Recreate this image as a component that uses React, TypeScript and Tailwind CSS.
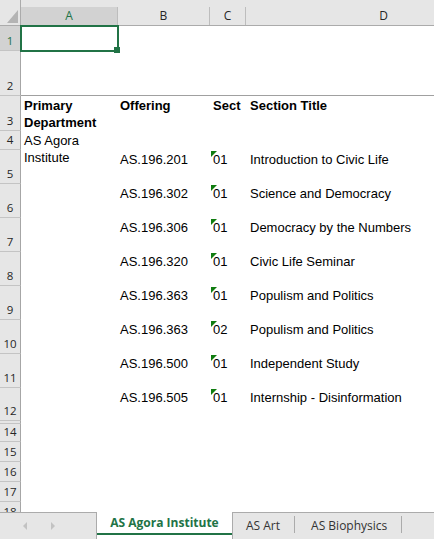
import React from "react";

type Row = {
  n: string;
  h: number;
  a?: string;
  b?: string;
  c?: string;
  d?: string;
  bold?: boolean;
  flag?: boolean;
  line?: boolean;
  sel?: boolean;
};

const data: [string, string, string][] = [
  ["AS.196.201", "01", "Introduction to Civic Life"],
  ["AS.196.302", "01", "Science and Democracy"],
  ["AS.196.306", "01", "Democracy by the Numbers"],
  ["AS.196.320", "01", "Civic Life Seminar"],
  ["AS.196.363", "01", "Populism and Politics"],
  ["AS.196.363", "02", "Populism and Politics"],
  ["AS.196.500", "01", "Independent Study"],
  ["AS.196.505", "01", "Internship - Disinformation"],
];

const ROWS: Row[] = [
  { n: "1", h: 25, sel: true },
  { n: "2", h: 45, line: true },
  { n: "3", h: 35, a: "Primary Department", b: "Offering", c: "Sect", d: "Section Title", bold: true },
  { n: "4", h: 19, a: "AS Agora Institute" },
  ...data.map(([b, c, d], i) => ({
    n: String(i + 5),
    h: i === 7 ? 33 : 34,
    b,
    c,
    d,
    flag: true,
  })),
  { n: "", h: 3 },
  { n: "14", h: 18 },
  { n: "15", h: 20 },
  { n: "16", h: 20 },
  { n: "17", h: 20 },
  { n: "18", h: 20 },
];

const COLS = [
  { id: "A", w: "w-[97px]", sel: true },
  { id: "B", w: "w-[92px]" },
  { id: "C", w: "w-[36px]" },
  { id: "D", w: "w-[276px]" },
];

function Flag() {
  return (
    <svg className="absolute left-[1px] top-[1px]" width="6" height="6" viewBox="0 0 6 6">
      <polygon points="0,0 6,0 0,6" fill="#107c10" />
    </svg>
  );
}

function SheetRow({ r }: { r: Row }) {
  const text = r.bold ? "font-bold" : "";
  return (
    <div className="flex shrink-0" style={{ height: r.h }}>
      <div
        className={
          "flex w-[21px] shrink-0 items-end justify-center border-r border-b border-r-[#a6a6a6] border-b-[#c4c4c4] pb-[1px] text-[11.5px] leading-[16px] overflow-hidden " +
          (r.sel ? "bg-[#d2d2d2] text-[#217346]" : "bg-[#e6e6e6] text-[#262626]")
        }
        style={{ fontFamily: '"Open Sans", "Noto Sans", sans-serif' }}
      >
        {r.n}
      </div>
      <div
        className={
          "flex flex-1 text-[13px] leading-[17px] text-black " +
          text +
          (r.line ? " border-b border-[#a0a0a0]" : "")
        }
        style={{ fontFamily: '"Liberation Sans", Arial, sans-serif' }}
      >
        <div className="w-[97px] shrink-0 pl-[3px] pr-[2px] pt-[1px]">{r.a}</div>
        <div className="w-[92px] shrink-0 whitespace-nowrap pl-[2px] pt-[1px]">{r.b}</div>
        <div className="relative w-[36px] shrink-0 whitespace-nowrap pl-[3px] pt-[1px]">
          {r.flag && <Flag />}
          {r.c}
        </div>
        <div className="w-[276px] shrink-0 whitespace-nowrap pl-[4px] pt-[1px]">{r.d}</div>
      </div>
    </div>
  );
}

export default function App() {
  const ui = { fontFamily: '"Open Sans", "Noto Sans", sans-serif' };
  return (
    <div className="flex h-[539px] w-[434px] flex-col overflow-hidden bg-white">
      <div className="relative flex-1 overflow-hidden">
        {/* column headers */}
        <div className="flex h-[26px] bg-[#e6e6e6]" style={ui}>
          <div className="flex w-[21px] shrink-0 items-end justify-end border-r border-b border-[#ababab] pr-[2px] pb-[2px]">
            <svg width="11" height="13" viewBox="0 0 11 13">
              <polygon points="11,0 11,13 0,13" fill="#b4b4b4" />
            </svg>
          </div>
          {COLS.map((c) => (
            <div key={c.id} className={c.w + " shrink-0 border-b border-[#ababab] pt-[7px]"}>
              <div
                className={
                  "flex h-full items-center justify-center border-r border-[#bdbdbd] text-[12px] " +
                  (c.sel ? "bg-[#d2d2d2] text-[#217346]" : "text-[#262626]")
                }
              >
                {c.id}
              </div>
            </div>
          ))}
        </div>

        {ROWS.map((r, i) => (
          <SheetRow key={i} r={r} />
        ))}

        {/* active cell */}
        <div className="absolute left-[20px] top-[25px] h-[27px] w-[99px] border-2 border-[#217346]" />
        <div className="absolute left-[114px] top-[47px] h-[6px] w-[6px] bg-[#217346]" />
      </div>

      {/* sheet tabs */}
      <div className="flex h-[27px] shrink-0 bg-[#e6e6e6] text-[12px]" style={ui}>
        <div className="flex w-[96px] shrink-0 items-center gap-[24px] border-t border-[#ababab] pl-[23px]">
          <svg width="4" height="8" viewBox="0 0 4 8">
            <polygon points="4,0 4,8 0,4" fill="#c2c2c2" />
          </svg>
          <svg width="4" height="8" viewBox="0 0 4 8">
            <polygon points="0,0 0,8 4,4" fill="#c2c2c2" />
          </svg>
        </div>
        <div className="flex w-[137px] shrink-0 flex-col border-x border-[#ababab] bg-white">
          <div className="flex flex-1 items-center justify-center pt-[1px] font-bold text-[#217346]">
            AS Agora Institute
          </div>
          <div className="h-[2px] bg-[#217346]" />
          <div className="h-[4px]" />
        </div>
        <div className="flex flex-1 items-start border-t border-[#ababab] text-[#333333]">
          <div className="flex h-full items-center pl-[13px] pr-[14px] pb-[1px]">AS Art</div>
          <div className="mt-[3px] h-[17px] w-px bg-[#ababab]" />
          <div className="flex h-full items-center pl-[16px] pr-[14px] pb-[1px]">AS Biophysics</div>
          <div className="mt-[3px] h-[17px] w-px bg-[#ababab]" />
        </div>
      </div>
    </div>
  );
}
